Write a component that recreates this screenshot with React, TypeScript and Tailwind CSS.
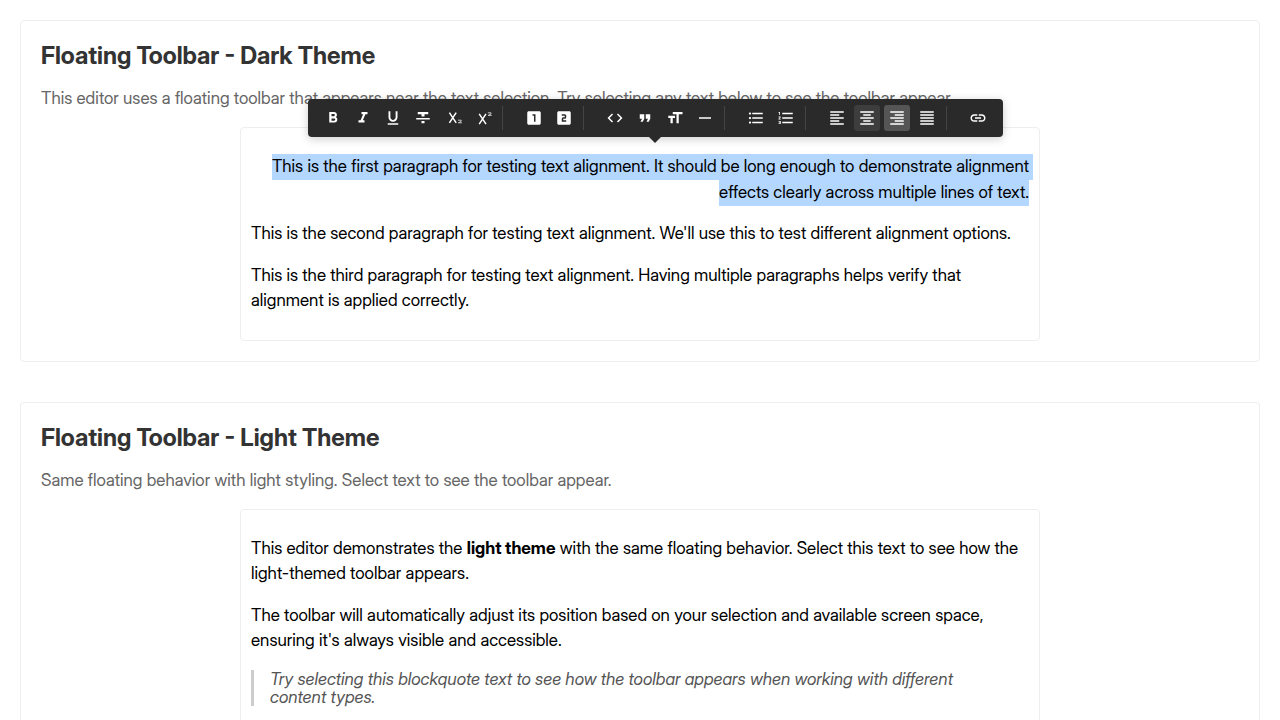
import { useEffect, useRef } from "react";
import type { ReactNode } from "react";
import type { IconType } from "react-icons";
import {
  MdCode,
  MdFormatAlignCenter,
  MdFormatAlignJustify,
  MdFormatAlignLeft,
  MdFormatAlignRight,
  MdFormatBold,
  MdFormatItalic,
  MdFormatListBulleted,
  MdFormatListNumbered,
  MdFormatQuote,
  MdFormatSize,
  MdFormatStrikethrough,
  MdFormatUnderlined,
  MdHorizontalRule,
  MdLink,
  MdLooksOne,
  MdLooksTwo,
} from "react-icons/md";

function SubscriptIcon() {
  return (
    <svg viewBox="0 0 18 18" className="size-[18px]" fill="none" stroke="currentColor" strokeWidth="1.5">
      <path d="M5.4 3.6l6.8 10.2M12.2 3.6L5.4 13.8" />
      <path d="M14 11.2h3.2v1.2l-2.8 1.4h3.5" strokeWidth="0.7" />
    </svg>
  );
}

function SuperscriptIcon() {
  return (
    <svg viewBox="0 0 18 18" className="size-[18px]" fill="none" stroke="currentColor" strokeWidth="1.5">
      <path d="M5.2 4.9l6.8 10.2M12 4.9L5.2 15.1" />
      <path d="M13.8 3.8h3.2v1.2l-2.8 1.4h3.5" strokeWidth="0.7" />
    </svg>
  );
}

type Tool = { label: string; icon: IconType | (() => ReactNode); state?: "hover" | "active" };

const groups: Tool[][] = [
  [
    { label: "Bold", icon: MdFormatBold },
    { label: "Italic", icon: MdFormatItalic },
    { label: "Underline", icon: MdFormatUnderlined },
    { label: "Strikethrough", icon: MdFormatStrikethrough },
    { label: "Subscript", icon: SubscriptIcon },
    { label: "Superscript", icon: SuperscriptIcon },
  ],
  [
    { label: "Heading 1", icon: MdLooksOne },
    { label: "Heading 2", icon: MdLooksTwo },
  ],
  [
    { label: "Code", icon: MdCode },
    { label: "Quote", icon: MdFormatQuote },
    { label: "Text size", icon: MdFormatSize },
    { label: "Divider", icon: MdHorizontalRule },
  ],
  [
    { label: "Bulleted list", icon: MdFormatListBulleted },
    { label: "Numbered list", icon: MdFormatListNumbered },
  ],
  [
    { label: "Align left", icon: MdFormatAlignLeft },
    { label: "Align center", icon: MdFormatAlignCenter, state: "hover" },
    { label: "Align right", icon: MdFormatAlignRight, state: "active" },
    { label: "Justify", icon: MdFormatAlignJustify },
  ],
  [{ label: "Link", icon: MdLink }],
];

const stateClass = {
  idle: "hover:bg-[#3d3d3d]",
  hover: "bg-[#3d3d3d]",
  active: "bg-[#555555]",
};

function FloatingToolbar() {
  return (
    <div
      role="toolbar"
      aria-label="Text formatting"
      className="absolute -top-[29px] left-[67px] z-10 flex items-center rounded bg-[#2a2a2a] px-3 py-1.5 text-white shadow-[0_2px_10px_rgba(0,0,0,0.2)]"
    >
      {groups.map((tools, index) => (
        <div key={index} className="flex items-center">
          {index > 0 && <span className="mr-[18px] ml-1.5 h-6 w-px bg-[#444444]" />}
          <div className="flex gap-1">
            {tools.map(({ label, icon: Icon, state }) => (
              <button
                key={label}
                type="button"
                aria-label={label}
                aria-pressed={state === "active"}
                className={`flex size-[26px] items-center justify-center rounded-[3px] ${stateClass[state ?? "idle"]}`}
              >
                <Icon size={18} />
              </button>
            ))}
          </div>
        </div>
      ))}
      <span className="absolute top-full left-1/2 -ml-[7px] border-x-6 border-t-6 border-x-transparent border-t-[#2a2a2a]" />
    </div>
  );
}

function Demo({ title, intro, toolbar, children }: { title: string; intro: string; toolbar?: ReactNode; children: ReactNode }) {
  return (
    <section className="rounded border border-[#eeeeee] p-5">
      <h2 className="text-2xl leading-[30px] font-bold text-[#333333]">{title}</h2>
      <p className="mt-[18px] leading-[18px] text-[#666666]">{intro}</p>
      <div className="relative mx-auto mt-5 max-w-[800px] rounded border border-[#eeeeee]">
        {toolbar}
        <div
          role="textbox"
          aria-multiline="true"
          aria-label={title}
          contentEditable
          suppressContentEditableWarning
          spellCheck={false}
          className="flex flex-col gap-4 px-2.5 py-[26px] leading-normal text-black outline-none selection:bg-[#b3d7ff]"
        >
          {children}
        </div>
      </div>
    </section>
  );
}

export default function App() {
  const firstParagraph = useRef<HTMLParagraphElement>(null);

  useEffect(() => {
    if (firstParagraph.current) {
      window.getSelection()?.selectAllChildren(firstParagraph.current);
    }
  }, []);

  return (
    <main className="flex flex-col gap-10 bg-white p-5 font-['Inter_Display','Inter','Liberation_Sans',sans-serif] text-[17px]">
      <Demo
        title="Floating Toolbar - Dark Theme"
        intro="This editor uses a floating toolbar that appears near the text selection. Try selecting any text below to see the toolbar appear."
        toolbar={<FloatingToolbar />}
      >
        <p ref={firstParagraph} className="text-right">
          This is the first paragraph for testing text alignment. It should be long enough to demonstrate alignment
          effects clearly across multiple lines of text.
        </p>
        <p>
          This is the second paragraph for testing text alignment. We'll use this to test different alignment options.
        </p>
        <p>
          This is the third paragraph for testing text alignment. Having multiple paragraphs helps verify that
          alignment is applied correctly.
        </p>
      </Demo>
      <Demo
        title="Floating Toolbar - Light Theme"
        intro="Same floating behavior with light styling. Select text to see the toolbar appear."
      >
        <p>
          This editor demonstrates the <strong>light theme</strong> with the same floating behavior. Select this text
          to see how the light-themed toolbar appears.
        </p>
        <p>
          The toolbar will automatically adjust its position based on your selection and available screen space,
          ensuring it's always visible and accessible.
        </p>
        <blockquote className="border-l-3 border-[#cccccc] pr-5 pl-4 leading-[18px] text-[#555555] italic">
          Try selecting this blockquote text to see how the toolbar appears when working with different content types.
        </blockquote>
      </Demo>
    </main>
  );
}
